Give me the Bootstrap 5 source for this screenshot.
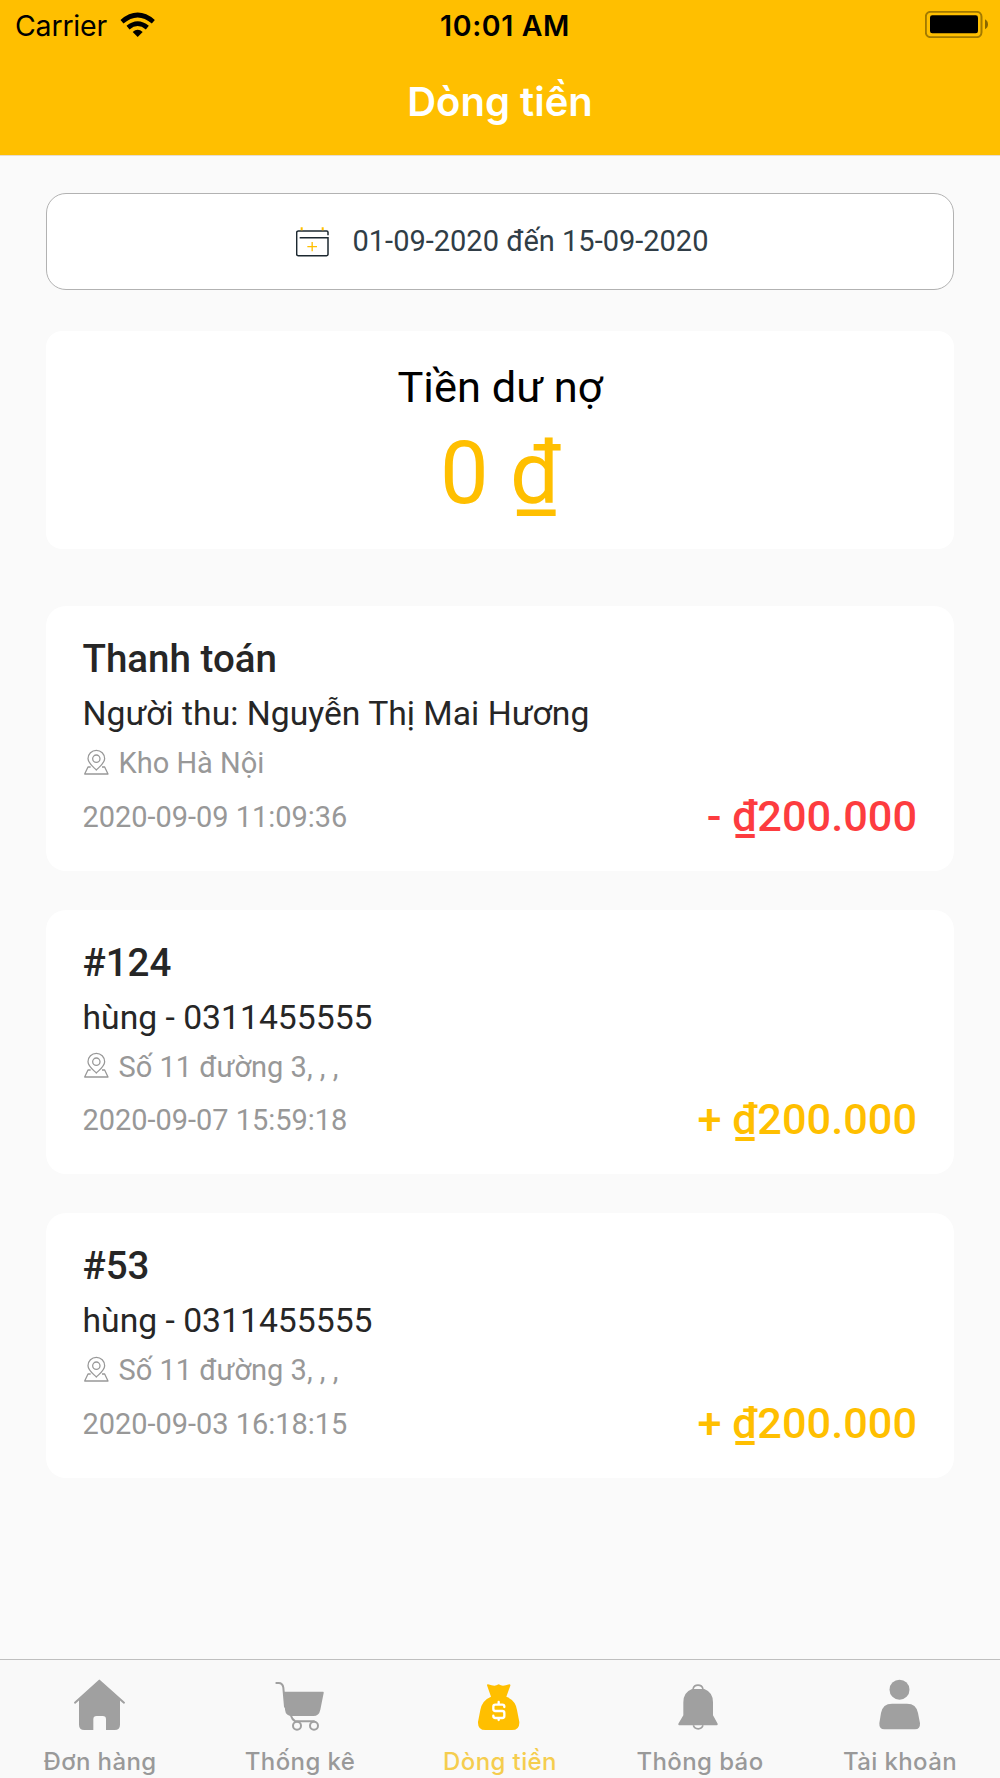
<!DOCTYPE html>
<html lang="vi">
<head>
<meta charset="utf-8">
<meta name="viewport" content="width=device-width, initial-scale=1">
<title>Dòng tiền</title>
<link href="https://cdn.jsdelivr.net/npm/bootstrap@5.3.0/dist/css/bootstrap.min.css" rel="stylesheet">
<style>
  body { font-family: Roboto, "Noto Sans", sans-serif; background: #fafafa; color: #262626; height: 1778px; overflow: hidden; }
  .app-head { height: 156px; background: #ffbf00; font-family: Inter, Roboto, sans-serif; border-bottom: 1px solid #e6dcd0; }
  .status-row { height: 51px; color: #000; font-size: 28.5px; line-height: 51px; }
  .side-l { width: 400px; padding-left: 15px; gap: 13px; }
  .side-l svg { margin-top: -2px; }
  .carrier { font-size: 28.5px; letter-spacing: -.2px; }
  .clock { font-weight: 600; font-size: 28.5px; letter-spacing: .6px; margin-left: 10px; }
  .side-r { width: 400px; padding-right: 12px; }
  .side-r svg { margin-top: -3px; }
  .head-title { color: #fff; font-weight: 600; font-size: 40px; line-height: 52px; margin: 25px 0 0; letter-spacing: 0; }
  .page-main { padding: 37px 46px 0; }
  .date-box { height: 97px; border: 1px solid #b2b2b2; border-radius: 20px; background: #fff; color: #303d46; font-size: 29px; gap: 24px; padding-left: 4px; }
  .balance { height: 218px; border-radius: 16px; background: #fff; margin-top: 41px; padding-top: 31px; color: #000; }
  .balance-label { font-size: 43.4px; line-height: 52px; }
  .balance-value { font-size: 86.5px; line-height: 100px; margin-top: 10px; color: #ffbf00; }
  .entries { margin-top: 57px; gap: 39px; }
  .entry { height: 264.5px; border: 0; border-radius: 20px; background: #fff; padding: 30px 37px 0 36.5px; color: #262626; }
  .entry-title { font-size: 38.5px; line-height: 46px; font-weight: 500; margin: 0; }
  .entry-person { font-size: 33.7px; line-height: 46px; margin-top: 9px; }
  .entry-place { font-size: 29px; line-height: 36px; margin-top: 8px; color: #989898; gap: 10px; }
  .entry-place svg { margin-top: -3px; }
  .entry-foot { height: 50px; margin-top: 10.5px; }
  .entry-time { font-size: 28.95px; color: #989898; padding-top: 2px; }
  .amount { font-size: 43.3px; line-height: 50px; font-weight: 500; color: #ffbf00; }
  .amount.minus { color: #fd3c3f; }
  .tabbar { height: 119px; background: #f9f9f9; border-top: 1px solid #bfbfbf; font-family: Inter, Roboto, sans-serif; }
  .tab { flex: 1 1 0; padding-top: 13px; color: #999; font-size: 24px; line-height: 30px; letter-spacing: .4px; font-weight: 500; text-decoration: none; white-space: nowrap; }
  .tab svg { margin-bottom: 14px; }
  .tab.on { color: #f5cd4e; }
</style>
<script src="https://cdn.jsdelivr.net/npm/bootstrap@5.3.0/dist/js/bootstrap.bundle.min.js"></script>
</head>
<body class="d-flex flex-column">
<svg class="d-none">
  <symbol id="pin" viewBox="160 470 78 84">
    <g fill="none" stroke="#989898" stroke-width="3.8" stroke-linejoin="round">
      <path d="M200 536C190 526 175 515 175 502A25 25 0 0 1 225 502C225 515 210 526 200 536Z"/>
      <circle cx="200" cy="502" r="11"/>
      <path d="M183 527H175L165 548H235L225 527H217"/>
    </g>
  </symbol>
</svg>

<header class="app-head flex-shrink-0">
  <div class="status-row d-flex justify-content-between align-items-center">
    <div class="side-l d-flex align-items-center">
      <span class="carrier">Carrier</span>
      <svg width="36" height="26" viewBox="360 34 108 78">
        <g fill="none" stroke="#000" stroke-width="14">
          <path d="M366 63Q413 23 460 63"/>
          <path d="M384 81Q413 57 442 81"/>
        </g>
        <path d="M398 94Q413 80 428 94L413 109Z"/>
      </svg>
    </div>
    <div class="clock">10:01 AM</div>
    <div class="side-r d-flex justify-content-end align-items-center">
      <svg width="63" height="27" viewBox="135 32 189 81">
        <rect x="137.500" y="34.500" width="167" height="76" rx="15" fill="none" stroke="#a37a00" stroke-width="6"/>
        <rect x="150" y="45" width="144" height="54" rx="7"/>
        <path d="M315 57Q324 62 324 72T315 87Z" fill="#8a6700"/>
      </svg>
    </div>
  </div>
  <h1 class="head-title text-center">Dòng tiền</h1>
</header>

<main class="page-main flex-grow-1">
  <div class="date-box d-flex justify-content-center align-items-center">
    <svg width="33" height="30" viewBox="46 140 99 90">
      <g fill="none" stroke="#1c2830" stroke-width="4.500">
        <path d="M142 165V156Q142 152 138 152H53Q48 152 48 157V222Q48 226 53 226H138Q142 226 142 222V172H57"/>
      </g>
      <g stroke="#ffbf00" stroke-width="6"><path d="M63 141V150M126 141V150"/><path stroke-width="4" d="M80 199H109M94.500 185V213"/></g>
    </svg>
    <span>01-09-2020 đến 15-09-2020</span>
  </div>

  <section class="balance text-center">
    <div class="balance-label">Tiền dư nợ</div>
    <div class="balance-value">0 ₫</div>
  </section>

  <section class="entries d-flex flex-column">
    <article class="entry card">
      <h2 class="entry-title">Thanh toán</h2>
      <div class="entry-person">Người thu: Nguyễn Thị Mai Hương</div>
      <div class="entry-place d-flex align-items-center"><svg width="26" height="28"><use href="#pin"/></svg><span>Kho Hà Nội</span></div>
      <div class="entry-foot d-flex justify-content-between align-items-center"><span class="entry-time">2020-09-09 11:09:36</span><span class="amount minus">- ₫200.000</span></div>
    </article>
    <article class="entry card">
      <h2 class="entry-title">#124</h2>
      <div class="entry-person">hùng - 0311455555</div>
      <div class="entry-place d-flex align-items-center"><svg width="26" height="28"><use href="#pin"/></svg><span>Số 11 đường 3, , ,</span></div>
      <div class="entry-foot d-flex justify-content-between align-items-center"><span class="entry-time">2020-09-07 15:59:18</span><span class="amount">+ ₫200.000</span></div>
    </article>
    <article class="entry card">
      <h2 class="entry-title">#53</h2>
      <div class="entry-person">hùng - 0311455555</div>
      <div class="entry-place d-flex align-items-center"><svg width="26" height="28"><use href="#pin"/></svg><span>Số 11 đường 3, , ,</span></div>
      <div class="entry-foot d-flex justify-content-between align-items-center"><span class="entry-time">2020-09-03 16:18:15</span><span class="amount">+ ₫200.000</span></div>
    </article>
  </section>
</main>

<nav class="tabbar d-flex flex-shrink-0">
  <a class="tab d-flex flex-column align-items-center" href="#">
    <svg width="60" height="60" viewBox="210 99 180 180" fill="#a0a0a0">
      <path d="M237 180L298 123L360 180V254Q360 270 344 270H318V238Q318 228 308 228H290Q280 228 280 238V270H253Q237 270 237 254Z"/>
      <path d="M225 188L298 122L372 188" fill="none" stroke="#a0a0a0" stroke-width="6" stroke-linecap="round" stroke-linejoin="round"/>
    </svg>
    <span>Đơn hàng</span>
  </a>
  <a class="tab d-flex flex-column align-items-center" href="#">
    <svg width="60" height="60" viewBox="810 99 180 180" fill="#a0a0a0">
      <path d="M851 155H969Q972 155 971 159L961 209Q957 228 940 228H877Q857 228 855 209Z"/>
      <g fill="none" stroke="#a0a0a0" stroke-width="6" stroke-linecap="round">
        <path d="M829 129H836Q848 129 850 143L855 200"/>
        <path d="M873 227Q876 238 886 244H942"/>
        <circle cx="891" cy="257" r="12"/><circle cx="942" cy="257" r="12"/>
      </g>
    </svg>
    <span>Thống kê</span>
  </a>
  <a class="tab on d-flex flex-column align-items-center" href="#">
    <svg width="60" height="60" viewBox="270 99 180 180" fill="#ffbf00">
      <path d="M321 136Q320 133 324 133Q336 137 343 137Q349 137 356 133Q363 137 369 137Q376 137 388 133Q392 133 391 137L379 170Q407 181 411 210L418 246Q419 270 396 270H316Q293 270 294 246L301 210Q306 181 333 170Z"/>
      <g fill="none" stroke="#fff" stroke-width="7" stroke-linecap="round" stroke-linejoin="round">
        <path d="M373 201V200Q373 194 367 194H346Q340 194 340 200V207Q340 213 346 213H367Q373 213 373 219V228Q373 234 367 234H346Q340 234 340 228V227M356 186V194M356 234V240"/>
      </g>
    </svg>
    <span>Dòng tiền</span>
  </a>
  <a class="tab d-flex flex-column align-items-center" href="#">
    <svg width="60" height="60" viewBox="150 99 180 180" fill="#a0a0a0">
      <path d="M190 187Q190 157 216 147H253Q279 157 279 187V226L293 251Q294 256 290 256H178Q174 256 175 251L190 226Z"/>
      <path d="M219 147A15.500 15.500 0 0 1 249 147M220 256A15 14 0 0 0 249 256" fill="none" stroke="#a0a0a0" stroke-width="5"/>
    </svg>
    <span>Thông báo</span>
  </a>
  <a class="tab d-flex flex-column align-items-center" href="#">
    <svg width="60" height="60" viewBox="750 99 180 180" fill="#a0a0a0">
      <circle cx="838.500" cy="149" r="30"/>
      <path d="M816 191H861Q889 191 894 219L900 250Q901 268 885 268H793Q777 268 778 250L783 219Q788 191 816 191Z"/>
    </svg>
    <span>Tài khoản</span>
  </a>
</nav>
</body>
</html>
